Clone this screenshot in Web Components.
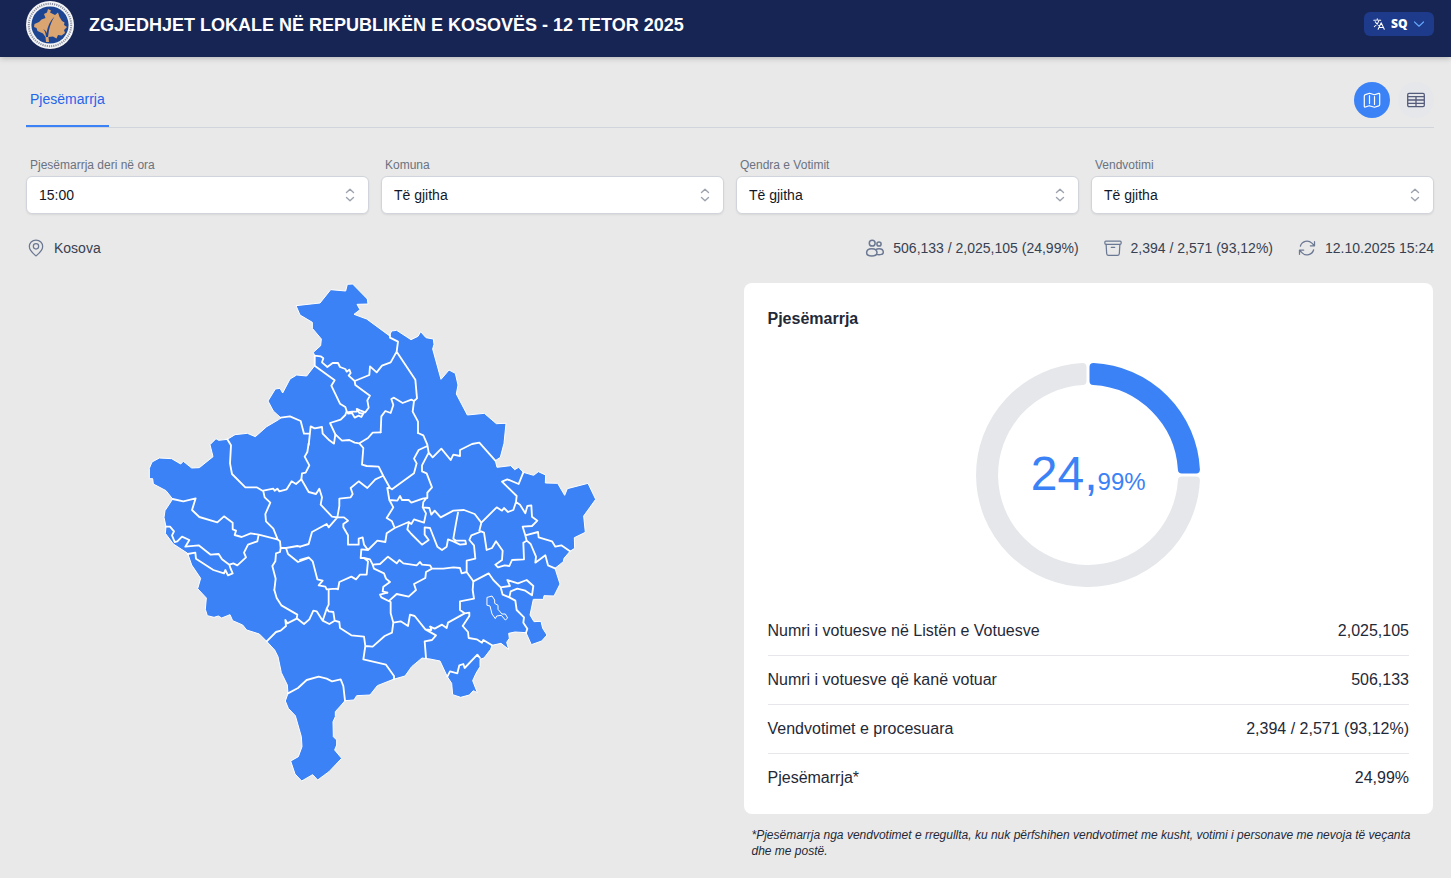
<!DOCTYPE html>
<html lang="sq">
<head>
<meta charset="utf-8">
<title>Zgjedhjet lokale në Republikën e Kosovës</title>
<style>
  body { margin: 0; background: #e9e9e9; color: #1f2937; font-family: "Liberation Sans", Arial, sans-serif; font-size: 14px; line-height: 20px; }
</style>
</head>
<body>
<results-page></results-page>

<template id="t-page">
  <style>
    :host { display: block; }
    main { padding: 16px 17px 16px 26px; }
    .tabs { display: flex; align-items: center; gap: 8px; border-bottom: 1px solid #d1d5db; }
    .tab { align-self: stretch; display: flex; align-items: center; padding: 0 4px; margin-right: auto; border-bottom: 2px solid #3b82f6; color: #2563eb; text-decoration: none; }
    .filters { display: grid; grid-template-columns: repeat(4, 1fr); gap: 12px; margin-top: 29px; }
    .info { display: flex; align-items: center; gap: 24px; margin-top: 24px; }
    .place { margin-right: auto; }
    .content { display: grid; grid-template-columns: 1fr 1fr; gap: 28px; margin-top: 25px; padding-right: 1px; }
    .note { margin: 13px 8px 0; font-size: 12px; line-height: 16px; font-style: italic; }
  </style>
  <site-header></site-header>
  <main>
    <nav class="tabs">
      <a class="tab" href="#pjesemarrja">Pjesëmarrja</a>
      <view-button label="Harta" active>
        <svg width="20" height="20" viewBox="0 0 20 20" fill="none" stroke="currentColor" stroke-width="1.2" stroke-linejoin="round" stroke-linecap="round"><path d="M7.500 3.200 3.400 4.600Q2.300 5 2.300 6V16.300Q2.300 17.400 3.400 17L7.200 15.700 12.500 17.300 16.700 15.900Q17.700 15.500 17.700 14.500V4.200Q17.700 3.100 16.700 3.400L12.500 4.800ZM7.500 5.700V13.600M12.500 6.600V14.500"/></svg>
      </view-button>
      <view-button label="Tabela">
        <svg width="20" height="20" viewBox="0 0 20 20" fill="none" stroke="currentColor" stroke-width="1.3"><rect x="1.700" y="3.400" width="16.600" height="13.200" rx="1.300"/><path d="M2 6.700H18M2 10H18M2 13.300H18M10 6.700V16.600"/></svg>
      </view-button>
    </nav>
    <section class="filters">
      <filter-select label="Pjesëmarrja deri në ora" value="15:00"></filter-select>
      <filter-select label="Komuna" value="Të gjitha"></filter-select>
      <filter-select label="Qendra e Votimit" value="Të gjitha"></filter-select>
      <filter-select label="Vendvotimi" value="Të gjitha"></filter-select>
    </section>
    <section class="info">
      <info-item class="place">
        <svg slot="icon" width="20" height="20" viewBox="0 0 24 24"><path d="M12 2.500c4.800 0 8 3.500 8 7.700 0 5-5.200 9-8 11.300-2.800-2.300-8-6.300-8-11.300C4 6 7.200 2.500 12 2.500Z"/><circle cx="12" cy="10" r="3.200"/></svg>Kosova
      </info-item>
      <info-item>
        <svg slot="icon" width="20" height="20" viewBox="0 0 20 20" stroke-width="1.250"><circle cx="7.200" cy="5.200" r="2.900"/><circle cx="14" cy="6" r="2.100"/><path d="M1.600 14.800C1.600 11.800 4 10.700 6.800 10.700S12 11.800 12 14.800C12 17 9.600 18 6.800 18S1.600 17 1.600 14.800ZM10.500 11.800Q12 10.700 14 10.700C16.600 10.700 18.300 12 18.300 14.200S16.200 16.700 14 16.700Q12.700 16.700 11.700 16.400"/></svg>506,133 / 2,025,105 (24,99%)
      </info-item>
      <info-item>
        <svg slot="icon" width="20" height="20" viewBox="0 0 24 24"><path d="M20.250 7.500 19.600 18.600A2.250 2.250 0 0 1 17.400 20.750H6.600A2.250 2.250 0 0 1 4.400 18.600L3.750 7.500M10 11.250H14M3.400 7.500H20.600C21.200 7.500 21.750 7 21.750 6.400V4.900C21.750 4.250 21.200 3.750 20.600 3.750H3.400C2.750 3.750 2.250 4.250 2.250 4.900V6.400C2.250 7 2.750 7.500 3.400 7.500Z"/></svg>2,394 / 2,571 (93,12%)
      </info-item>
      <info-item>
        <svg slot="icon" width="20" height="20" viewBox="0 0 24 24"><path d="M16.023 9.348h4.992M2.985 19.644v-4.992h4.992M2.985 14.652l3.181 3.183a8.250 8.250 0 0 0 13.803-3.700M4.031 9.865a8.250 8.250 0 0 1 13.803-3.700l3.181 3.182M21.015 4.356v4.992"/></svg>12.10.2025 15:24
      </info-item>
    </section>
    <section class="content">
      <kosovo-map></kosovo-map>
      <div>
        <turnout-card></turnout-card>
        <p class="note">*Pjesëmarrja nga vendvotimet e rregullta, ku nuk përfshihen vendvotimet me kusht, votimi i personave me nevoja të veçanta dhe me postë.</p>
      </div>
    </section>
  </main>
</template>

<template id="t-header">
  <style>
    :host { display: flex; align-items: center; gap: 15px; padding: 1px 17px 8px 26px; background: #172554; color: #fff; box-shadow: 0 1px 6px rgba(0,0,0,.25); }
    .logo { display: block; flex: none; }
    h1 { margin: 0 auto 0 0; font-size: 18px; line-height: 28px; font-weight: 700; }
    .lang { display: grid; width: 70px; height: 24px; margin-bottom: 2px; border-radius: 6px; background: #1e3a8a; align-items: center; }
    .lang > * { grid-area: 1 / 1; }
    .lang svg { pointer-events: none; fill: none; stroke-linecap: round; stroke-linejoin: round; }
    .tr { margin-left: 8px; stroke: #fff; }
    .ch { justify-self: end; margin-right: 9px; stroke: #60a5fa; }
    select { appearance: none; height: 24px; width: 100%; padding: 0 0 0 27px; border: 0; border-radius: 6px; background: none; color: #fff; font: 800 12px/24px "Open Sans", sans-serif; }
    option { color: #111827; }
  </style>
  <svg class="logo" width="48" height="48" viewBox="0 0 48 48">
    <circle cx="24" cy="24" r="24" fill="#f3f4f6"/>
    <circle cx="24" cy="24" r="21.200" fill="none" stroke="#8b8fa0" stroke-width="2" stroke-dasharray="1.200 1"/>
    <circle cx="24" cy="24" r="18.600" fill="#1d4490"/>
    <path fill="#dba572" d="M18 13 21 11.500 22 8 25 9.500 24 11.500 29 14 32 11.500 33.500 16 36 20 38.500 21.500 38 24 41 26 38 29 39 32 35.500 34.500 32 34 30.500 37.500 27 35.500 22.500 36 23 41 20 41 19.500 36 17 32.500 11.500 30 10.500 27 8 26 8.500 23 13 21 15.500 18.500 19.500 17Z"/>
    <path fill="#1d4490" d="M17 28Q20 29 20.500 32Q22 22 28.500 15.500Q23 24 22 36H20Q19.500 30 17 28Z"/>
  </svg>
  <h1>ZGJEDHJET LOKALE NË REPUBLIKËN E KOSOVËS - 12 TETOR 2025</h1>
  <div class="lang">
    <select aria-label="Gjuha"><option>SQ</option><option>EN</option><option>SR</option></select>
    <svg class="tr" width="14" height="14" viewBox="0 0 24 24" stroke-width="1.800"><path d="m10.500 21 5.250-11.250L21 21m-9-3h7.500M3 5.600a48 48 0 0 1 12 0M9 3v2.200M12.300 5.400C11.200 9.600 8 14 4 16.500M5.600 8.200C7 11.200 9.500 13.300 12 14.500"/></svg>
    <svg class="ch" width="12" height="12" viewBox="0 0 12 12" stroke-width="1.200"><path d="M1.500 4 6 8.200 10.500 4"/></svg>
  </div>
</template>

<template id="t-view">
  <style>
    :host { display: block; }
    button { display: flex; align-items: center; justify-content: center; width: 36px; height: 36px; margin: 9px 0; padding: 0; border: 0; border-radius: 50%; background: #e5e7eb; color: #555b7a; }
    :host([active]) button { background: #3b82f6; color: #fff; }
  </style>
  <button type="button"><slot></slot></button>
</template>

<template id="t-filter">
  <style>
    :host { display: block; }
    label { display: block; margin: 0 4px 3px; font-size: 12px; line-height: 16px; color: #6b7280; }
    .box { display: grid; align-items: center; }
    .box > * { grid-area: 1 / 1; }
    select { appearance: none; width: 100%; height: 38px; padding: 0 32px 0 12px; border: 1px solid #d1d5db; border-radius: 6px; background: #fff; color: #111827; font: inherit; box-shadow: 0 1px 2px rgba(0,0,0,.08); }
    svg { justify-self: end; margin-right: 11px; pointer-events: none; }
  </style>
  <label for="field"></label>
  <div class="box">
    <select id="field"><option></option></select>
    <svg width="16" height="16" viewBox="0 0 16 16" fill="none" stroke="#9ca3af" stroke-width="1.400" stroke-linecap="round" stroke-linejoin="round"><path d="M4.500 5.500 8 2.300 11.500 5.500M4.500 10.500 8 13.700 11.500 10.500"/></svg>
  </div>
</template>

<template id="t-info">
  <style>
    :host { display: flex; align-items: center; gap: 8px; color: #374151; }
    ::slotted(svg) { fill: none; stroke: #6b7893; stroke-width: 1.500; stroke-linecap: round; stroke-linejoin: round; }
  </style>
  <slot name="icon"></slot><span><slot></slot></span>
</template>

<template id="t-card">
  <style>
    :host { display: block; padding: 24px 24px 12px; border-radius: 8px; background: #fff; font-size: 16px; line-height: 24px; }
    h2 { margin: 0; font-size: 16px; line-height: 24px; }
    .chart { display: grid; place-items: center; margin: 32px 0 20px; }
    .chart > * { grid-area: 1 / 1; }
    .value { padding-top: 6px; color: #3b82f6; font-size: 48px; line-height: 48px; }
    small { font-size: 24px; }
    table { width: 100%; border-collapse: collapse; }
    th, td { padding: 12px 0; font-weight: 400; text-align: left; }
    td { text-align: right; }
    tr + tr { border-top: 1px solid #e5e7eb; }
  </style>
  <h2>Pjesëmarrja</h2>
  <div class="chart">
    <svg width="224" height="224" viewBox="-112 -112 224 224" stroke-width="8" stroke-linejoin="round">
      <path fill="#3b82f6" stroke="#3b82f6" d="M5.500-107.900A108 108 0 0 1 107.900-5.500L93.900-5.500A94 94 0 0 0 5.500-93.900Z"/>
      <path fill="#e5e7eb" stroke="#e5e7eb" d="M107.900 5.500A108 108 0 1 1-5.500-107.900L-5.500-93.900A94 94 0 1 0 93.900 5.500Z"/>
    </svg>
    <div class="value">24,<small>99%</small></div>
  </div>
  <table>
    <tr><th scope="row">Numri i votuesve në Listën e Votuesve</th><td>2,025,105</td></tr>
    <tr><th scope="row">Numri i votuesve që kanë votuar</th><td>506,133</td></tr>
    <tr><th scope="row">Vendvotimet e procesuara</th><td>2,394 / 2,571 (93,12%)</td></tr>
    <tr><th scope="row">Pjesëmarrja*</th><td>24,99%</td></tr>
  </table>
</template>

<template id="t-map">
  <style>
    :host { display: block; }
    svg { display: block; width: 450px; max-width: 100%; margin: 0 auto; overflow: visible; }
  </style>
  <svg viewBox="18 24 1350 1500" role="img" aria-label="Harta e Kosovës" fill="none" stroke="#fff" stroke-width="5.500" stroke-linejoin="round" stroke-linecap="round">
    <!-- country -->
    <path fill="#3b82f6" stroke-width="3" d="M422 428 400 408 384 378 406 342 420 340 428 354 450 312 470 300 500 303 524 272 524 242 520 232 542 212 544 192 517 160 517 142 480 120 468 92 540 84 572 44 617 48 622 28 638 27 682 72 684 87 651 88 660 104 642 118 680 132 748 182 755 168 770 166 813 194 834 184 842 170 858 188 880 192 882 208 878 222 903 313 927 285 946 295 954 330 949 357 982 420 1033 415 1069 446 1098 445 1092 505 1081 547 1066 557 1071 577 1112 572 1124 584 1136 577 1150 592 1181 601 1195 590 1217 600 1216 624 1253 625 1274 661 1282 641 1344 625 1367 673 1331 723 1336 772 1303 788 1304 820 1290 829 1272 850 1270 860 1245 880 1260 927 1242 963 1212 962 1210 973 1180 973 1170 1020 1182 1040 1203 1039 1208 1060 1221 1080 1205 1098 1174 1109 1158 1073 1125 1071 1106 1075 1108 1090 1100 1102 1106 1123 1083 1105 1056 1111 1052 1123 1032 1149 1020 1153 1020 1175 1008 1195 998 1217 1012 1253 1000 1247 988 1260 962 1267 938 1259 935 1225 922 1205 900 1158 870 1152 846 1149 815 1175 795 1203 760 1213 712 1232 690 1260 650 1262 642 1275 615 1277 604 1290 586 1310 586 1325 579 1340 580 1385 590 1395 590 1410 584 1425 605 1450 567 1490 533 1515 518 1499 485 1518 465 1497 452 1458 475 1445 486 1415 484 1385 466 1322 445 1300 436 1278 444 1255 442 1230 424 1193 414 1145 404 1125 380 1099 358 1077 320 1065 308 1050 278 1037 270 1019 245 1029 235 1023 222 1027 202 1022 196 1003 199 969 173 941 182 910 155 870 143 835 100 807 76 775 78 755 72 727 75 707 98 672 78 647 40 627 38 611 28 611 28 580 36 561 58 549 95 551 122 567 130 559 155 579 178 578 219 545 210 509 228 491 236 496 262 493 285 479 322 475 346 485 380 455 414 435Z"/>
    <!-- municipal borders, north -->
    <g transform="translate(360 0)">
      <path d="M164 242 182 244 190 250 186 262 202 276 218 264 234 264 240 276 256 282 260 290 268 284 272 294 266 302 284 318 328 300 330 274 350 292 366 272 392 262 410 230 414 200 390 188 390 180M164 242 164 272 224 316 214 332 240 386 256 396 260 408 256 420 242 434 210 444 226 478 222 506 208 496 188 476 186 456 164 460 152 454 146 510M284 318 286 330 330 362 322 376 326 398 316 412 300 406 292 402 290 410 276 410 260 412M264 416 276 414 284 428 296 422 304 426 312 412M290 402 298 414 308 416M410 230 466 314 471 370 462 378 454 374 428 384 402 368 394 372 400 390 392 414 376 408 364 424 362 472M462 378 458 410 474 440 474 474M62 428 90 424 122 438 132 476 148 476"/>
    </g>
    <!-- west -->
    <g transform="translate(0 435)">
      <path d="M262 58 273 76 270 130 276 162 316 202 350 202 370 214 374 232 391 248 376 282 378 304 400 326 412 356M370 212 400 206 404 212 412 206 418 214 440 208 455 184 468 192 484 178 486 160 497 158 508 136 494 110 502 96 506 70M98 237 130 244 167 235 156 270 178 291 232 307 252 289 278 308 278 328 288 332 284 345 305 351 332 340 356 344 412 358 420 364 422 384 420 396 408 400 406 424 397 438 407 476 403 510M422 384 438 384 472 378 480 380M438 384 444 402 474 426 506 414M356 344 352 364 324 374 312 398 318 412 292 436 280 430 268 434 272 446 278 460 264 466 256 450 252 460 220 450 168 416 166 398 143 402M78 320 90 320 102 334 96 346 104 366 112 364 126 350 148 360 136 380 176 376 212 404 236 402 246 418 268 434"/>
    </g>
    <!-- centre -->
    <g transform="translate(480 435)">
      <path d="M4 178 26 216 48 222 58 206 66 232 62 254 96 290 112 292 86 322 80 312 36 336 26 372 0 380M112 292 118 258 118 236 152 232 158 222 152 204 176 184 202 204 226 178 248 168M106 43 126 62 148 60 164 68 178 70 190 84 186 134 200 138 236 140 250 168 270 204 276 208 342 160 350 130 342 116 356 90 382 78M178 70 204 54 218 38 242 37M354 39 370 46 382 74 386 98 398 112 424 86 452 120 460 104 480 108 480 90 516 72 538 68 586 122M386 98 366 136 366 154 380 160 396 202 382 218 382 234 368 236 334 248 326 240 306 240 300 228 292 242 268 240 262 204 270 204M268 240 280 262 260 294 276 304 284 324 260 340 256 366 232 362 204 390 192 374 188 352 176 356 176 374 144 374 144 346 130 322 130 312 144 302 132 292 112 292M284 324 326 306 334 312 342 298 372 308 378 280 368 262 370 246 380 234M368 262 388 264 394 284 404 272 422 292 460 272 492 270 524 282 544 308M474 278 468 310 460 356 468 362 496 362 498 372 480 374 460 364 444 358 440 380 426 390 412 380 390 324 374 322 374 344 386 360 366 374 334 342 322 328 326 310M540 336 514 346 508 360 522 376 526 416 500 422 500 456 485 460 480 444 460 442 430 446 396 446 390 436 366 434 360 426 350 436 310 430 298 420 290 430 264 410 240 432 218 434 210 418 192 414 182 414 184 388 204 390M218 434 222 446 252 460 258 476 270 486 250 500 248 514 262 518M192 414 204 424 200 464 180 464 168 478 154 470 118 486 114 508 108 506M396 446 378 456 376 474 342 492 348 510 326 530 290 522 268 542M500 456 520 484M0 420 26 412 38 424 52 478 68 482 56 496 76 500 80 508 108 506"/>
    </g>
    <!-- east -->
    <g transform="translate(870 615)">
      <path d="M154 128 200 82 216 92 222 84 234 96 250 90 258 66 260 48 216 5 232-2 266 12 280-23M258 66 270 74 286 100 292 78 304 76 306 110 322 122 306 138 278 140 286 166 324 156 326 172 366 184 376 200 394 196 420 214M286 166 290 182 280 188 282 238 246 240 238 258 224 256 204 262 196 254 216 240 218 212 198 184 186 204 170 210 162 158 148 152 154 128M290 182 302 192 318 230 316 248 346 226 354 256 375 265M130 304 176 280 190 300 212 322 240 318 232 300 264 310 290 300 310 318 306 346 286 332 262 326 242 334 238 352 256 362 260 390 282 412 280 428 292 446 288 458M212 322 218 344 238 352M130 304 128 330 132 356 90 364 90 390 104 400 118 398 118 408 98 438 114 456 116 474 140 478 156 488 160 480 186 496M104 400 54 428 50 444 36 434 14 446 0 440M52 590 60 574 82 580 88 556 100 552 104 564 142 524 150 534"/>
      <path stroke-width="3" d="M172 352 186 348 194 360 194 370 204 376 204 388 216 402 226 402 233 414 226 420 214 406 200 408 196 416 186 402 180 378 172 376Z"/>
    </g>
    <!-- south -->
    <g transform="translate(120 885)">
      <path d="M283 60 290 84 304 106 352 134 350 146 322 160 316 150 318 168 302 182 288 186 260 214M352 146 372 162 388 148 400 122 410 124 428 152 440 116 446 104 446 60M440 116 446 124 460 126 464 152 448 162 428 152M464 152 478 156 480 174 514 196 552 200 556 228 578 230 614 198 636 188 640 158 632 130 632 96 604 82 600 74 622 68M640 158 662 154 684 168 690 134 704 138 736 178 754 180 752 170M736 178 768 196 756 210 734 214 738 264M556 228 550 268 618 284 642 318 642 328M324 370 354 354 380 330 416 320 440 326 456 334 482 328 490 348 495 392"/>
    </g>
  </svg>
</template>

<script>
  class Part extends HTMLElement {
    connectedCallback() {
      if (this.shadowRoot) return;
      const root = this.attachShadow({ mode: "open" });
      root.append(document.getElementById(this.constructor.template).content.cloneNode(true));
      this.setup(root);
    }
    setup() {}
  }
  class SiteHeader extends Part { static template = "t-header"; }
  class ViewButton extends Part {
    static template = "t-view";
    setup(root) { root.querySelector("button").setAttribute("aria-label", this.getAttribute("label")); }
  }
  class FilterSelect extends Part {
    static template = "t-filter";
    setup(root) {
      root.querySelector("label").textContent = this.getAttribute("label");
      root.querySelector("option").textContent = this.getAttribute("value");
    }
  }
  class InfoItem extends Part { static template = "t-info"; }
  class TurnoutCard extends Part { static template = "t-card"; }
  class KosovoMap extends Part { static template = "t-map"; }
  class ResultsPage extends Part { static template = "t-page"; }
  customElements.define("site-header", SiteHeader);
  customElements.define("view-button", ViewButton);
  customElements.define("filter-select", FilterSelect);
  customElements.define("info-item", InfoItem);
  customElements.define("turnout-card", TurnoutCard);
  customElements.define("kosovo-map", KosovoMap);
  customElements.define("results-page", ResultsPage);
</script>
</body>
</html>
